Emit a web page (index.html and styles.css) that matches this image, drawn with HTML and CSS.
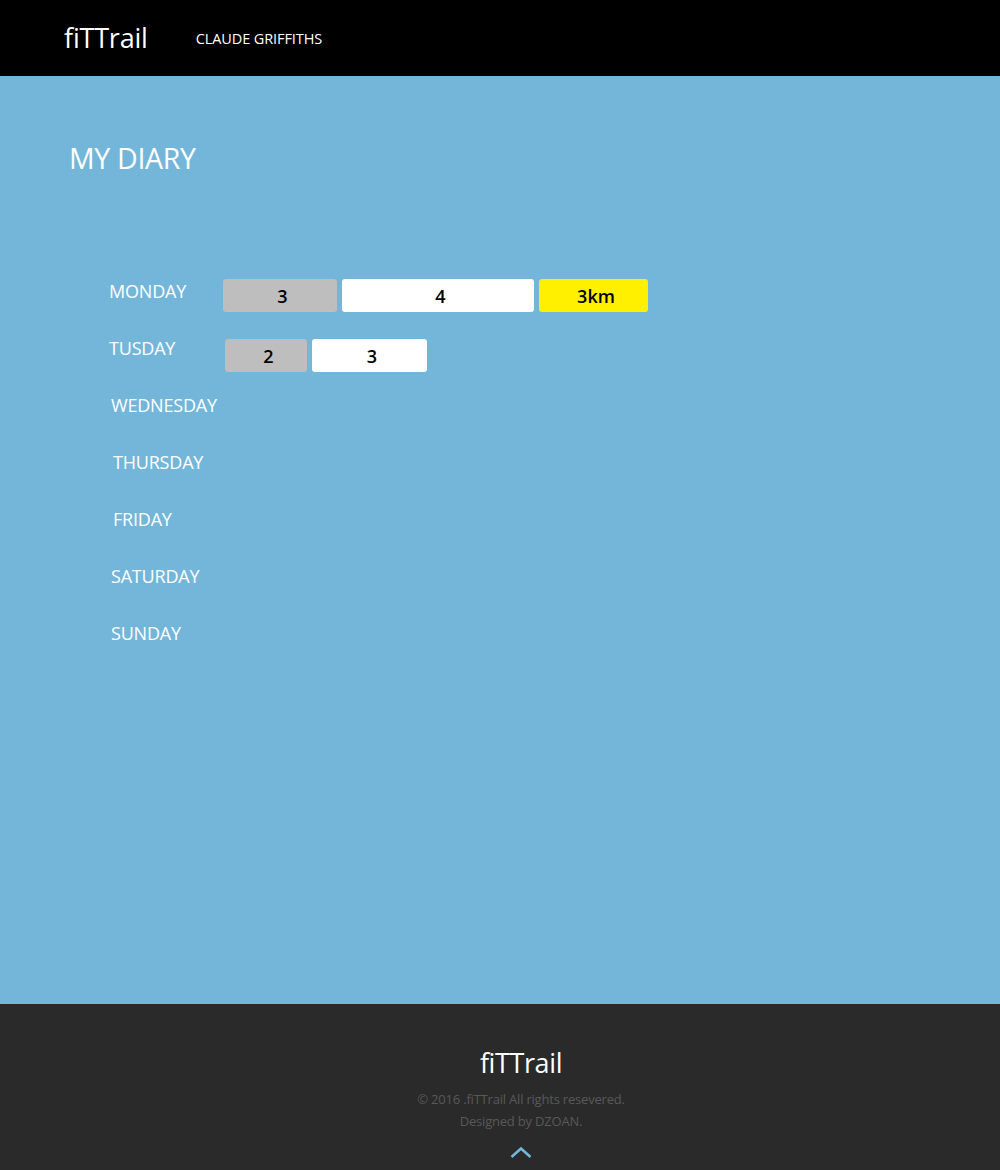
FILE: index.html
```html
<!DOCTYPE html>
<html>
<head>
<meta charset="utf-8">
<title>fiTTrail - My Diary</title>
<link rel="stylesheet" href="styles.css">
</head>
<body>
<header class="topbar">
  <a class="brand" href="#">fiTTrail</a>
  <nav class="nav"><a href="#">CLAUDE GRIFFITHS</a></nav>
</header>
<main class="main">
  <h1 class="title">MY DIARY</h1>
  <div class="week">
    <div class="day">
      <span class="day-name">MONDAY</span>
      <div class="bars">
        <span class="bar bar-grey" style="width:114px">3</span>
        <span class="bar bar-white" style="width:192px">4</span>
        <span class="bar bar-yellow" style="width:109px">3km</span>
      </div>
    </div>
    <div class="day">
      <span class="day-name">TUSDAY</span>
      <div class="bars bars-shift">
        <span class="bar bar-grey" style="width:82px">2</span>
        <span class="bar bar-white" style="width:115px">3</span>
      </div>
    </div>
    <div class="day"><span class="day-name day-name-in">WEDNESDAY</span></div>
    <div class="day"><span class="day-name day-name-in2">THURSDAY</span></div>
    <div class="day"><span class="day-name day-name-in2">FRIDAY</span></div>
    <div class="day"><span class="day-name day-name-in">SATURDAY</span></div>
    <div class="day"><span class="day-name day-name-in">SUNDAY</span></div>
  </div>
</main>
<footer class="footer">
  <div class="footer-brand">fiTTrail</div>
  <p class="footer-text">© 2016 .fiTTrail All rights resevered.</p>
  <p class="footer-text">Designed by DZOAN.</p>
  <a class="to-top" href="#" aria-label="Back to top">
    <svg width="22" height="12" viewBox="0 0 22 12"><path d="M1.5 11 L11 2.5 L20.5 11" fill="none" stroke="#74b6da" stroke-width="2.6"/></svg>
  </a>
</footer>
</body>
</html>
```
FILE: styles.css
```css
* { box-sizing: border-box; }
body {
  margin: 0;
  font-family: "Open Sans", "Noto Sans", sans-serif;
  background: #2a2a2a;
}
a { text-decoration: none; color: inherit; }

.topbar {
  height: 76px;
  background: #000;
  display: flex;
  align-items: center;
  padding-left: 64px;
}
.brand {
  color: #fff;
  font-size: 27px;
  letter-spacing: -0.2px;
  margin-right: 48px;
  padding-bottom: 2px;
}
.nav a {
  color: #fff;
  font-size: 14.5px;
  letter-spacing: -0.1px;
}

.main {
  height: 928px;
  background: #74b6da;
  padding: 0 0 0 69px;
  overflow: hidden;
}
.title {
  margin: 0;
  padding-top: 62px;
  font-weight: 400;
  font-size: 28.5px;
  line-height: 40px;
  letter-spacing: -0.3px;
  color: #fff;
}
.week {
  margin-top: 101px;
  padding-left: 40px;
  display: flex;
  flex-direction: column;
}
.day {
  height: 57px;
  display: flex;
  align-items: flex-start;
}
.day-name {
  width: 114px;
  color: #fff;
  font-size: 18px;
  line-height: 24px;
  letter-spacing: -0.2px;
  white-space: nowrap;
}
.day-name-in { padding-left: 2px; }
.day-name-in2 { padding-left: 4px; }
.bars {
  display: flex;
  gap: 5px;
}
.bars-shift { margin-top: 3px; margin-left: 2px; }
.bar {
  height: 33px;
  border-radius: 3px;
  display: flex;
  align-items: center;
  justify-content: center;
  padding-left: 5px;
  font-weight: 600;
  font-size: 18px;
  color: #000;
}
.bar-grey { background: #bebebe; }
.bar-white { background: #fff; }
.bar-yellow { background: #fff000; }

.footer {
  height: 166px;
  background: #2a2a2a;
  display: flex;
  flex-direction: column;
  align-items: center;
  padding-top: 40px;
  padding-left: 42px;
}
.footer-brand {
  color: #fff;
  font-size: 27px;
  letter-spacing: -0.4px;
  line-height: 38px;
}
.footer-text {
  margin: 0;
  color: #595959;
  font-size: 13px;
  line-height: 22px;
  letter-spacing: -0.2px;
}
.footer-text:first-of-type { margin-top: 6px; }
.to-top {
  margin-top: 14px;
  display: block;
  height: 12px;
}
.to-top svg { display: block; }
```
